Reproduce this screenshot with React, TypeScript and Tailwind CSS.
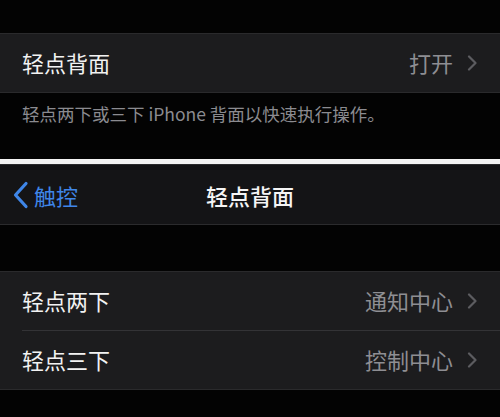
import React from "react";

const font = { fontFamily: '"Noto Sans CJK SC", "Noto Sans", sans-serif' };

function Chevron() {
  return (
    <svg width="11" height="16" viewBox="0 0 11 16" className="shrink-0">
      <path d="M2 1.5 L8.5 8 L2 14.5" fill="none" stroke="#5c5c60" strokeWidth="2.2" strokeLinecap="round" strokeLinejoin="round" />
    </svg>
  );
}

function Row({ label, value }: { label: string; value: string }) {
  return (
    <div className="flex h-[58px] items-center pl-[22px] pr-[22px] bg-[#1c1c1e]">
      <span className="flex-1 text-[22px] leading-none text-[#f2f2f2] -mt-[2px]">{label}</span>
      <span className="text-[22px] leading-none text-[#8e8e93] mr-[14px] -mt-[2px]">{value}</span>
      <Chevron />
    </div>
  );
}

export default function App() {
  return (
    <div className="w-[500px] h-[417px] bg-[#030303] overflow-hidden" style={font}>
      <div className="h-[33px]" />
      <div className="border-t border-b border-[#2a2a2c]">
        <Row label="轻点背面" value="打开" />
      </div>
      <div className="h-[66px] pl-[22px] pt-[9px]">
        <p className="text-[17.5px] leading-[24px] text-[#8b8b90] whitespace-nowrap">
          轻点两下或三下 iPhone 背面以快速执行操作。
        </p>
      </div>
      <div className="h-[5px] bg-[#f4f4f4]" />
      <div className="relative flex h-[61px] items-center border-t border-b border-[#2b2b2d] bg-[#141416]">
        <div className="flex items-center pl-[12px]">
          <svg width="18" height="28" viewBox="0 0 18 28" className="shrink-0">
            <path d="M14 2.5 L3.5 14 L14 25.5" fill="none" stroke="#3f86e8" strokeWidth="3.2" strokeLinecap="round" strokeLinejoin="round" />
          </svg>
          <span className="ml-[4px] text-[22px] leading-none text-[#3f86e8]">触控</span>
        </div>
        <div className="absolute inset-0 flex items-center justify-center pointer-events-none">
          <span className="text-[22px] leading-none font-medium text-[#f5f5f5]">轻点背面</span>
        </div>
      </div>
      <div className="h-[46px]" />
      <div className="border-t border-b border-[#2a2a2c] bg-[#1c1c1e]">
        <Row label="轻点两下" value="通知中心" />
        <div className="ml-[22px] h-px bg-[#333336]" />
        <Row label="轻点三下" value="控制中心" />
      </div>
    </div>
  );
}
